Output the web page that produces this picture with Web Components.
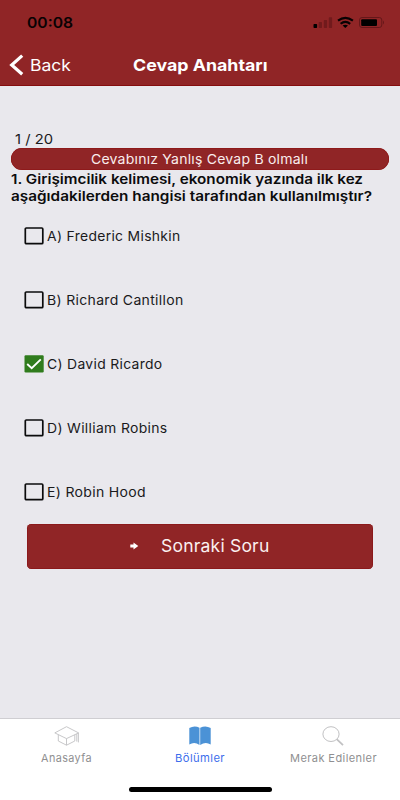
<!DOCTYPE html>
<html lang="tr">
<head>
<meta charset="utf-8">
<title>Cevap Anahtarı</title>
<style>
html,body{margin:0;height:100%;overflow:hidden;background:#e9e8ed}
body{font-family:Inter,"Liberation Sans",sans-serif;color:#1a1a1c}
</style>
</head>
<body>
<quiz-app></quiz-app>
<script>
function define(name, html, init) {
  const t = document.createElement('template');
  t.innerHTML = html;
  customElements.define(name, class extends HTMLElement {
    connectedCallback() {
      if (this.shadowRoot) return;
      this.attachShadow({mode: 'open'}).append(t.content.cloneNode(true));
      if (init) init(this, this.shadowRoot);
    }
  });
}

// One line of text stretched horizontally to the width given in "w".
define('wide-text', `<style>
:host{display:block;white-space:nowrap;flex:none}
span{display:inline-block;transform-origin:0 50%}
</style><span><slot></slot></span>`, (el, root) => {
  const w = +el.getAttribute('w');
  const s = root.querySelector('span');
  el.style.width = w + 'px';
  s.style.transform = 'scaleX(' + w / s.getBoundingClientRect().width + ')';
});

define('status-bar', `<style>
:host{display:flex;height:44px;box-sizing:border-box;padding:14px 15px 0 27px;justify-content:space-between;align-items:flex-start;color:#080203}
wide-text{font-size:14.5px;font-weight:600;line-height:18px}
svg{display:block}
</style><wide-text w="46">00:08</wide-text>
<svg width="73" height="18" viewBox="312 14 73 18">
<rect x="313.5" y="24" width="3.6" height="4" rx=".7"/>
<g fill="#711a1c"><rect x="318.7" y="22" width="3.3" height="6" rx=".7"/><rect x="323.8" y="20" width="3.3" height="8" rx=".7"/><rect x="328.8" y="17.2" width="3.3" height="10.8" rx=".7"/></g>
<g fill="none" stroke="#080203" stroke-width="2.1"><path d="M338 20.7Q345.3 15 352.9 20.7"/><path d="M340.6 23.8Q345.3 20 350.2 23.8"/></g>
<path d="M342.6 25.6Q345.3 23.8 348 25.6L345.3 28Z"/>
<rect x="359.5" y="17.5" width="22.3" height="10" rx="2.5" fill="none" stroke="#651719"/>
<rect x="361.2" y="19.3" width="15.8" height="6.6" rx=".9"/><path d="M383 20.5q2 2 0 4z" fill="#651719"/>
</svg>`);

define('nav-bar', `<style>
:host{display:flex;height:42px;align-items:center;color:#fff;padding-left:9px}
svg{display:block;margin-right:5.5px}
.b{font-size:16.5px;flex:none;box-sizing:border-box}
.t{font-size:16.5px;font-weight:700}
.back{display:flex;align-items:center;width:124px}
</style><div class="back"><svg width="15" height="22" viewBox="0 0 15 22"><path d="M13.2 1.6L2.7 11l10.5 9.2" fill="none" stroke="#fff" stroke-width="3.2"/></svg>
<wide-text class="b" w="41">Back</wide-text></div><wide-text class="t" w="134.5">Cevap Anahtarı</wide-text>`);

define('result-pill', `<style>
:host{display:flex;height:22px;margin-left:11px;width:378px;border-radius:11px;background:#902526;box-shadow:inset 0 0 0 .5px #8b1011;color:#f9eded;justify-content:center;align-items:center;font-size:13.5px;letter-spacing:.2px}
wide-text{margin-right:1px}
</style><wide-text w="217"><slot></slot></wide-text>`);

define('answer-option', `<style>
:host{display:flex;height:18px;align-items:center;margin-bottom:46px;padding-left:24px;font-size:13.5px;letter-spacing:.3px}
svg{display:block;margin-right:3px}
</style><svg width="20" height="18" viewBox="0 0 20 18"></svg><slot></slot>`, (el, root) => {
  root.querySelector('svg').innerHTML = el.hasAttribute('checked')
    ? '<rect x=".5" y=".3" width="19.2" height="17.2" rx="1.2" fill="#307c1d"/><path d="M3.2 9l4.5 4.1L16.8 4.4" fill="none" stroke="#fff" stroke-width="1.9"/>'
    : '<rect x="1.3" y="1" width="17.5" height="15.7" rx="1" fill="none" stroke="#0b0b0c" stroke-width="1.7"/>';
});

define('next-button', `<style>
:host{display:flex;height:44.5px;box-sizing:border-box;width:346px;margin-left:27px;padding:0 0 1px 103px;border-radius:4.5px;background:#902526;box-shadow:inset 0 0 0 .5px #860f10;align-items:center;color:#fbf0f0;font-size:17.3px;letter-spacing:.2px}
svg{display:block;margin-right:22px}
</style><svg width="9" height="8" viewBox="0 0 9 8"><path d="M.3 2.6H3.5V.4L8.3 4 3.5 7.6V5.4H.3Z" fill="#fff"/></svg><wide-text w="108.5"><slot></slot></wide-text>`);

define('tab-item', `<style>
:host{display:flex;flex-direction:column;align-items:center;flex:1;color:#8f8f91;font-size:11px;line-height:14px;letter-spacing:.4px}
:host([active]){color:#3d6eec}
.i{height:22px;margin:6px 0 4px}
</style><div class="i"><slot name="icon"></slot></div><slot></slot>`);

define('tab-bar', `<style>
:host{display:flex;flex-direction:column;justify-content:space-between;height:82px;box-sizing:border-box;border-top:1px solid #cfced2;background:#fff}
.tabs{display:flex}
.home{width:143px;height:5px;border-radius:3px;background:#000;margin:0 0 8px 129px}
svg{display:block}
</style><div class="tabs">
<tab-item><svg slot="icon" width="26" height="22" viewBox="54 724.6 26 22" fill="none" stroke="#c1c1c3" stroke-width=".9"><path d="M54.8 732.5L66.5 726.3 78.6 732.5 66.5 738.2ZM58.3 734.4V740.6L66.5 744.8 74.8 740.6V734.4M66.5 738.2V744.8M76.8 733.5V741.2M78.4 732.5V742"/></svg><wide-text w="51">Anasayfa</wide-text></tab-item>
<tab-item active><svg slot="icon" width="22" height="22" viewBox="189 724.6 22 22" fill="#4b92d6"><path d="M189.3 727.6Q194.5 724.7 199.5 727.4V744.6Q194.5 740.8 189.3 744.1ZM200.2 727.4Q205.5 724.7 210.7 727.6V744.1Q205.5 740.8 200.2 744.6Z"/></svg><wide-text w="50">Bölümler</wide-text></tab-item>
<tab-item><svg slot="icon" width="22" height="22" viewBox="322 724.6 22 22" fill="none" stroke="#c1c1c3"><ellipse cx="331" cy="733.7" rx="8.1" ry="7.4"/><path d="M336.7 738.7L343 744.7" stroke-width="1.8"/></svg><wide-text w="87">Merak Edilenler</wide-text></tab-item>
</div><div class="home"></div>`);

define('quiz-app', `<style>
:host{display:flex;flex-direction:column;width:400px;height:800px;background:#e9e8ed}
header{background:#902526;height:86px;box-sizing:border-box;border-bottom:1px solid #850d0e}
main{flex:1;padding-top:45px}
.count{margin-left:14.5px;font-size:13.5px;line-height:17px}
.q{margin-left:10.5px;padding-top:1px;height:56px;font-size:13.5px;font-weight:600;line-height:16.5px;color:#0c0c0d}
next-button{margin-top:-23px}
</style>
<header><status-bar></status-bar><nav-bar></nav-bar></header>
<main>
<wide-text class="count" w="38">1 / 20</wide-text>
<result-pill>Cevabınız Yanlış Cevap B olmalı</result-pill>
<div class="q"><wide-text w="352">1. Girişimcilik kelimesi, ekonomik yazında ilk kez</wide-text><wide-text w="361">aşağıdakilerden hangisi tarafından kullanılmıştır?</wide-text></div>
<answer-option><wide-text w="133.5">A) Frederic Mishkin</wide-text></answer-option>
<answer-option><wide-text w="136.5">B) Richard Cantillon</wide-text></answer-option>
<answer-option checked><wide-text w="115.5">C) David Ricardo</wide-text></answer-option>
<answer-option><wide-text w="120.5">D) William Robins</wide-text></answer-option>
<answer-option><wide-text w="99">E) Robin Hood</wide-text></answer-option>
<next-button>Sonraki Soru</next-button>
</main>
<tab-bar></tab-bar>`);
</script>
</body>
</html>
